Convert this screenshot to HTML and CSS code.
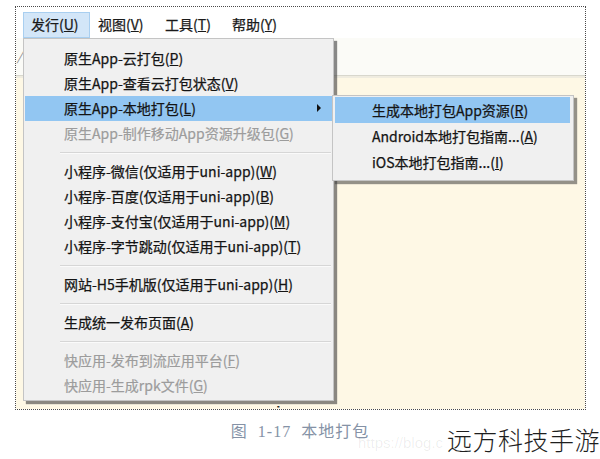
FILE: index.html
```html
<!DOCTYPE html>
<html lang="zh-CN">
<head>
<meta charset="utf-8">
<title>本地打包</title>
<link rel="stylesheet" href="styles.css">
</head>
<body>
<div class="page">
  <div class="frame">
    <div class="menubar">
      <span class="mb-item active">发行(<u>U</u>)</span>
      <span class="mb-item">视图(<u>V</u>)</span>
      <span class="mb-item">工具(<u>T</u>)</span>
      <span class="mb-item">帮助(<u>Y</u>)</span>
    </div>
    <div class="toolbar"><span class="stray">/</span></div>
    <div class="editor"><span class="peek">uni-app</span></div>

    <div class="menu">
      <div class="item">原生App-云打包(<u>P</u>)</div>
      <div class="item">原生App-查看云打包状态(<u>V</u>)</div>
      <div class="item hl">原生App-本地打包(<u>L</u>)<span class="arrow"></span></div>
      <div class="item off">原生App-制作移动App资源升级包(<u>G</u>)</div>
      <div class="sep"></div>
      <div class="item">小程序-微信(仅适用于uni-app)(<u>W</u>)</div>
      <div class="item">小程序-百度(仅适用于uni-app)(<u>B</u>)</div>
      <div class="item">小程序-支付宝(仅适用于uni-app)(<u>M</u>)</div>
      <div class="item">小程序-字节跳动(仅适用于uni-app)(<u>T</u>)</div>
      <div class="sep"></div>
      <div class="item">网站-H5手机版(仅适用于uni-app)(<u>H</u>)</div>
      <div class="sep"></div>
      <div class="item">生成统一发布页面(<u>A</u>)</div>
      <div class="sep"></div>
      <div class="item off">快应用-发布到流应用平台(<u>F</u>)</div>
      <div class="item off">快应用-生成rpk文件(<u>G</u>)</div>
    </div>

    <div class="submenu">
      <div class="sitem hl">生成本地打包App资源(<u>R</u>)</div>
      <div class="sitem">Android本地打包指南...(<u>A</u>)</div>
      <div class="sitem">iOS本地打包指南...(<u>I</u>)</div>
    </div>
  </div>
  <div class="caption">图 1-17 本地打包</div>
  <div class="watermark">https://blog.c</div>
  <div class="brand">远方科技手游</div>
</div>
</body>
</html>
```

FILE: styles.css
```css
html, body {
  margin: 0;
  padding: 0;
  background: #ffffff;
}

.page {
  position: relative;
  width: 600px;
  height: 459px;
  overflow: hidden;
  font-family: "Noto Sans CJK SC", "Noto Sans", sans-serif;
}

.frame {
  position: relative;
  box-sizing: border-box;
  margin: 6px 0 0 15px;
  width: 571px;
  height: 404px;
  border: 1px dotted #4a4a4a;
  overflow: hidden;
  display: flex;
  flex-direction: column;
}

.menubar {
  height: 31px;
  flex: none;
  background: #ffffff;
  display: flex;
  padding-left: 7px;
  box-sizing: border-box;
}

.mb-item {
  box-sizing: border-box;
  width: 67px;
  height: 26px;
  margin-top: 5px;
  padding-left: 7px;
  border: 1px solid transparent;
  font-size: 14px;
  line-height: 23px;
  color: #1a1a1a;
  white-space: nowrap;
  -webkit-text-stroke: 0.25px #1a1a1a;
}

.mb-item.active {
  background: #d3e6f8;
  border-color: #a9cff0;
}

.toolbar {
  position: relative;
  height: 37px;
  flex: none;
  background: #fbfbf7;
  border-bottom: 1px solid #d8d7cd;
}

.stray {
  position: absolute;
  left: 1px;
  top: 8px;
  font-size: 13px;
  color: #8d8d8d;
  font-style: italic;
}

.editor {
  flex: 1;
  background: #fef8e5;
  border-top: 2px solid #efece0;
  display: flex;
  flex-direction: column;
  justify-content: flex-end;
  padding-left: 242px;
}

.peek {
  font-family: "Liberation Sans", sans-serif;
  font-size: 15px;
  font-weight: bold;
  color: #2a2a2a;
  line-height: 15px;
  margin-bottom: -10px;
}

/* main dropdown */
.menu {
  position: absolute;
  left: 7px;
  top: 31px;
  width: 311px;
  box-sizing: border-box;
  background: #f0f0f0;
  border: 1px solid #c4c4c4;
  padding: 7px 1px 2px 1px;
  box-shadow: 3px 3px 1px rgba(60, 60, 60, 0.6);
}

.item {
  position: relative;
  height: 25px;
  line-height: 25px;
  padding-left: 39px;
  font-size: 14px;
  color: #141414;
  white-space: nowrap;
  -webkit-text-stroke: 0.25px #141414;
}

.item.hl {
  background: #92c6f2;
}

.item.off {
  color: #9c9c9c;
  -webkit-text-stroke: 0.2px #9c9c9c;
}

.arrow {
  position: absolute;
  right: 11px;
  top: 8px;
  width: 0;
  height: 0;
  border-left: 4px solid #111;
  border-top: 4px solid transparent;
  border-bottom: 4px solid transparent;
}

.sep {
  height: 13px;
  margin: 0 1px 0 35px;
  position: relative;
}

.sep::before {
  content: "";
  position: absolute;
  left: 0;
  right: 0;
  top: 6px;
  height: 1px;
  background: #d6d6d6;
  border-bottom: 1px solid #fafafa;
}

/* submenu */
.submenu {
  position: absolute;
  left: 316px;
  top: 88px;
  width: 242px;
  box-sizing: border-box;
  background: #f0f0f0;
  border: 1px solid #c4c4c4;
  padding: 1px 3px 5px 2px;
  box-shadow: 3px 3px 1px rgba(60, 60, 60, 0.55);
}

.sitem {
  height: 26px;
  line-height: 26px;
  padding-left: 37px;
  font-size: 14px;
  color: #141414;
  white-space: nowrap;
  -webkit-text-stroke: 0.25px #141414;
}

.sitem.hl {
  background: #92c6f2;
}

/* captions below */
.caption {
  margin-top: 13px;
  text-align: center;
  font-family: "Liberation Serif", "Noto Sans CJK SC", serif;
  font-size: 16px;
  line-height: 18px;
  color: #8592a6;
  letter-spacing: 1px;
  word-spacing: 5px;
}

.watermark {
  position: absolute;
  left: 358px;
  top: 434px;
  font-family: "Liberation Sans", sans-serif;
  font-size: 15px;
  color: rgba(0, 0, 0, 0.07);
  white-space: nowrap;
}

.brand {
  position: absolute;
  right: 0;
  top: 423px;
  font-family: "Noto Sans CJK SC Light", "Noto Sans CJK SC DemiLight", "Noto Sans CJK SC", sans-serif;
  font-size: 25px;
  line-height: 32px;
  font-weight: 300;
  letter-spacing: 0.5px;
  color: #1e1e1e;
  white-space: nowrap;
}
```
